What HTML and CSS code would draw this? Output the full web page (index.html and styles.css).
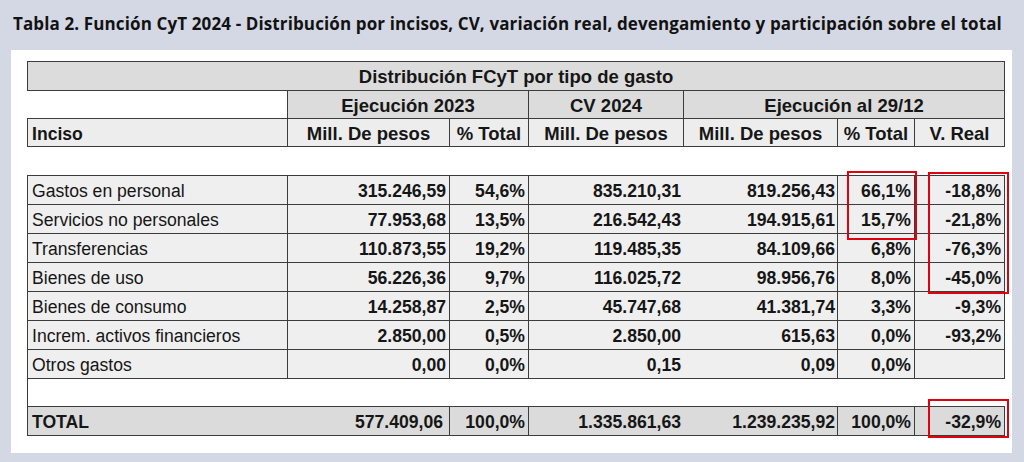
FILE: index.html
```html
<!DOCTYPE html>
<html lang="es">
<head>
<meta charset="utf-8">
<title>Tabla 2</title>
<link rel="stylesheet" href="styles.css">
</head>
<body>
<div class="page">
  <h1 class="title">Tabla 2. Función CyT 2024 - Distribución por incisos, CV, variación real, devengamiento y participación sobre el total</h1>
  <div class="panel">
    <table class="tbl">
      <colgroup>
        <col class="c1"><col class="c2"><col class="c3"><col class="c4"><col class="c5"><col class="c6"><col class="c7">
      </colgroup>
      <thead>
        <tr class="h1row"><th colspan="7" class="g">Distribución FCyT por tipo de gasto</th></tr>
        <tr class="h2row">
          <th class="blank"></th>
          <th colspan="2" class="g">Ejecución 2023</th>
          <th class="g">CV 2024</th>
          <th colspan="3" class="g">Ejecución al 29/12</th>
        </tr>
        <tr class="h3row">
          <th class="lbl">Inciso</th>
          <th>Mill. De pesos</th>
          <th>% Total</th>
          <th>Mill. De pesos</th>
          <th>Mill. De pesos</th>
          <th>% Total</th>
          <th>V. Real</th>
        </tr>
      </thead>
      <tbody>
        <tr class="spacer"><td colspan="7"></td></tr>
        <tr class="row"><td class="lbl">Gastos en personal</td><td>315.246,59</td><td>54,6%</td><td colspan="2" class="pair"><span>835.210,31</span><span>819.256,43</span></td><td>66,1%</td><td>-18,8%</td></tr>
        <tr class="row"><td class="lbl">Servicios no personales</td><td>77.953,68</td><td>13,5%</td><td colspan="2" class="pair"><span>216.542,43</span><span>194.915,61</span></td><td>15,7%</td><td>-21,8%</td></tr>
        <tr class="row"><td class="lbl">Transferencias</td><td>110.873,55</td><td>19,2%</td><td colspan="2" class="pair"><span>119.485,35</span><span>84.109,66</span></td><td>6,8%</td><td>-76,3%</td></tr>
        <tr class="row"><td class="lbl">Bienes de uso</td><td>56.226,36</td><td>9,7%</td><td colspan="2" class="pair"><span>116.025,72</span><span>98.956,76</span></td><td>8,0%</td><td>-45,0%</td></tr>
        <tr class="row"><td class="lbl">Bienes de consumo</td><td>14.258,87</td><td>2,5%</td><td colspan="2" class="pair"><span>45.747,68</span><span>41.381,74</span></td><td>3,3%</td><td>-9,3%</td></tr>
        <tr class="row"><td class="lbl">Increm. activos financieros</td><td>2.850,00</td><td>0,5%</td><td colspan="2" class="pair"><span>2.850,00</span><span>615,63</span></td><td>0,0%</td><td>-93,2%</td></tr>
        <tr class="row"><td class="lbl">Otros gastos</td><td>0,00</td><td>0,0%</td><td colspan="2" class="pair"><span>0,15</span><span>0,09</span></td><td>0,0%</td><td></td></tr>
        <tr class="gap"><td colspan="7"></td></tr>
        <tr class="total"><td colspan="2" class="pair2"><span class="tl">TOTAL</span><span>577.409,06</span></td><td>100,0%</td><td colspan="2" class="pair"><span>1.335.861,63</span><span>1.239.235,92</span></td><td>100,0%</td><td>-32,9%</td></tr>
      </tbody>
    </table>
    <div class="mark mark-a"></div>
    <div class="mark mark-b"></div>
    <div class="mark mark-c"></div>
  </div>
</div>
</body>
</html>
```

FILE: styles.css
```css
* { box-sizing: border-box; }
html, body { margin: 0; padding: 0; }
body {
  background: #d4d8e4;
  width: 1024px;
  height: 462px;
  overflow: hidden;
}
.page {
  padding: 0 12px 0 11px;
}
.title {
  margin: 0;
  height: 50px;
  padding: 14px 0 0 2px;
  font-family: "Open Sans", "Liberation Sans", sans-serif;
  font-weight: 700;
  font-size: 17px;
  letter-spacing: 0.12px;
  line-height: 20px;
  color: #121212;
  white-space: nowrap;
}
.panel {
  position: relative;
  background: #ffffff;
  height: 403px;
  padding: 11px 8px 0 16px;
}
.tbl {
  width: 977px;
  border-collapse: collapse;
  table-layout: fixed;
  font-family: "Liberation Sans", Arial, sans-serif;
  font-size: 17.6px;
  color: #161616;
}
.c1 { width: 260px; }
.c2 { width: 162px; }
.c3 { width: 79px; }
.c4 { width: 155px; }
.c5 { width: 154px; }
.c6 { width: 77px; }
.c7 { width: 90px; }
.tbl th, .tbl td {
  padding: 0 3px;
  border: 1px solid #3c3c3c;
  white-space: nowrap;
  overflow: hidden;
}
.tbl th {
  font-weight: 700;
  font-size: 18.5px;
  text-align: center;
}
.h1row th { height: 29px; padding-top: 2px; }
.h2row th { height: 28px; padding-top: 2px; }
.h3row th { height: 28px; background: #ededed; padding-top: 3px; }
.g { background: #dcdcdc; }
.h2row .blank {
  background: #ffffff;
  border-left: none;
}
.tbl .lbl {
  text-align: left;
  padding-left: 4px;
}
.h3row .lbl { font-size: 17.6px; }
.spacer td {
  height: 29px;
  border-left: none;
  border-right: none;
  background: #ffffff;
}
.row td {
  height: 29px;
  background: #efefef;
  font-weight: 700;
  text-align: right;
  padding-top: 2px;
}
.row td.lbl { font-weight: 400; }
.pair span, .pair2 span {
  display: inline-block;
}
.tbl .pair {
  padding: 2px 2px 0 0;
  text-align: left;
}
.pair span { width: 152px; text-align: right; }
.pair span + span { width: 154px; }
.gap td {
  height: 28px;
  background: #ffffff;
  border-right: none;
}
.total td {
  height: 29px;
  background: #dbdbdb;
  font-weight: 700;
  text-align: right;
  padding-top: 2px;
}
.tbl .pair2 { text-align: left; padding-left: 4px; }
.pair2 .tl { width: 256px; text-align: left; }
.pair2 span + span { width: 155px; text-align: right; }
.mark {
  position: absolute;
  border: 2px solid #e1000d;
}
.mark-a { left: 836px; top: 121px; width: 70px; height: 69px; }
.mark-b { left: 917px; top: 122px; width: 81px; height: 122px; }
.mark-c { left: 917px; top: 349px; width: 81px; height: 39px; }
```
